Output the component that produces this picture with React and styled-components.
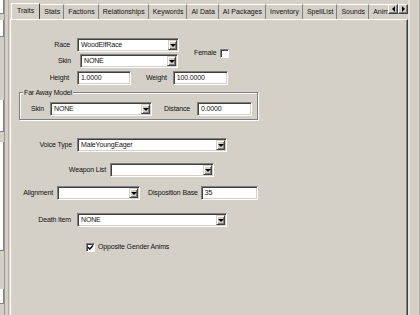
import React from "react";
import styled, { createGlobalStyle } from "styled-components";

const GlobalStyle = createGlobalStyle`
  html, body {
    margin: 0;
    padding: 0;
    background: #d4d0c8;
  }
  body {
    font-family: "Liberation Sans", Arial, sans-serif;
    font-size: 7px;
    letter-spacing: -0.15px;
    color: #111;
    overflow: hidden;
  }
`;

const TABS = [
  "Traits",
  "Stats",
  "Factions",
  "Relationships",
  "Keywords",
  "AI Data",
  "AI Packages",
  "Inventory",
  "SpellList",
  "Sounds",
  "Animation",
];

const Window = styled.div`
  display: flex;
  width: 420px;
  height: 315px;
  overflow: hidden;
  background: #d4d0c8;
`;

const LeftPane = styled.div`
  width: 4px;
  flex: none;
  margin-right: 5px;
  display: flex;
  flex-direction: column;
  border-right: 1px solid #9a968e;
  box-shadow: 3px 0 0 #d4d0c8, 4px 0 0 #b4b0a8;
`;

const Sliver = styled.div`
  height: ${(p) => p.$h}px;
  margin-top: ${(p) => p.$mt || 0}px;
  background: #fff;
  border-right: 1px solid #808080;
  border-bottom: 1px solid #808080;
`;

const Main = styled.div`
  flex: 1;
  display: flex;
  flex-direction: column;
  min-width: 0;
`;

const TabStrip = styled.div`
  display: flex;
  align-items: flex-end;
  height: 19px;
`;

const TabList = styled.div`
  flex: 1;
  min-width: 0;
  display: flex;
  align-items: flex-end;
  overflow: hidden;
  padding-left: 1px;
  height: 100%;
`;

const Tab = styled.div`
  flex: none;
  height: ${(p) => (p.$active ? 16 : 14)}px;
  line-height: ${(p) => (p.$active ? 14 : 13)}px;
  padding: ${(p) => (p.$active ? "0 5px" : "0 3px")};
  letter-spacing: 0;
  border-top: 1px solid #fff;
  border-left: 1px solid ${(p) => (p.$active ? "#fff" : "transparent")};
  border-right: 1px solid ${(p) => (p.$active ? "#404040" : "#808080")};
  white-space: nowrap;
  position: relative;
  z-index: ${(p) => (p.$active ? 1 : 0)};
  margin-bottom: ${(p) => (p.$active ? -1 : 0)}px;
  background: #d4d0c8;
`;

const Scroller = styled.div`
  display: flex;
  flex: none;
  margin: 0 0 5px 0;
`;

const ArrowBtn = styled.div`
  width: 10px;
  height: 10px;
  box-sizing: border-box;
  background: #d4d0c8;
  border-top: 1px solid #fff;
  border-left: 1px solid #fff;
  border-right: 1px solid #404040;
  border-bottom: 1px solid #404040;
  box-shadow: inset -1px -1px 0 #808080;
  display: flex;
  align-items: center;
  justify-content: center;
  &::after {
    content: "";
    border-top: 3px solid transparent;
    border-bottom: 3px solid transparent;
    ${(p) =>
      p.$dir === "left"
        ? "border-right: 3px solid #000;"
        : "border-left: 3px solid #000;"}
  }
`;

const Panel = styled.div`
  flex: 1;
  border-top: 1px solid #fff;
  border-left: 1px solid #fff;
  border-right: 1px solid #404040;
  box-shadow: inset -1px 0 0 #808080;
  padding-top: 18px;
  display: flex;
  flex-direction: column;
  align-items: flex-start;
`;

const RightStrip = styled.div`
  width: 9px;
  flex: none;
  border-left: 2px solid #e6e3dc;
  border-right: 1px solid #b4b0a8;
`;

const Row = styled.div`
  display: flex;
  align-items: center;
  margin-top: ${(p) => p.$mt || 0}px;
  padding-left: ${(p) => p.$pl || 0}px;
`;

const Stack = styled.div`
  display: flex;
  flex-direction: column;
`;

const Label = styled.span`
  ${(p) => (p.$w ? `width: ${p.$w}px; text-align: right;` : "")}
  margin-left: ${(p) => p.$ml || 0}px;
  white-space: nowrap;
  line-height: 10px;
  flex: none;
`;

const Field = styled.div`
  width: ${(p) => p.$w}px;
  height: 14px;
  margin-left: ${(p) => p.$ml || 0}px;
  box-sizing: border-box;
  background: #fff;
  border-top: 1px solid #808080;
  border-left: 1px solid #808080;
  border-right: 1px solid #fff;
  border-bottom: 1px solid #fff;
  box-shadow: inset 1px 1px 0 #404040, inset -1px -1px 0 #d4d0c8;
  display: flex;
  align-items: center;
  padding: 2px 2px 2px 3px;
  flex: none;
`;

const Value = styled.span`
  flex: 1;
  white-space: nowrap;
  overflow: hidden;
  line-height: 10px;
`;

const DropBtn = styled.span`
  width: 9px;
  height: 10px;
  box-sizing: border-box;
  background: #d4d0c8;
  border-top: 1px solid #d4d0c8;
  border-left: 1px solid #d4d0c8;
  border-right: 1px solid #404040;
  border-bottom: 1px solid #404040;
  box-shadow: inset 1px 1px 0 #fff, inset -1px -1px 0 #808080;
  display: flex;
  align-items: center;
  justify-content: center;
  margin-right: -1px;
  &::after {
    content: "";
    border-left: 3px solid transparent;
    border-right: 3px solid transparent;
    border-top: 3px solid #000;
  }
`;

const Check = styled.span`
  width: 9px;
  height: 9px;
  box-sizing: border-box;
  margin-left: ${(p) => p.$ml || 0}px;
  background: #fff;
  border-top: 1px solid #808080;
  border-left: 1px solid #808080;
  border-right: 1px solid #fff;
  border-bottom: 1px solid #fff;
  box-shadow: inset 1px 1px 0 #404040;
  display: flex;
  align-items: center;
  justify-content: center;
  flex: none;
`;

const GroupBox = styled.div`
  position: relative;
  margin: 7px 0 0 8px;
  width: 239px;
  box-sizing: border-box;
  border: 1px solid #808080;
  box-shadow: inset 1px 1px 0 #fff, 1px 1px 0 #fff;
  padding: 9px 0 3px 0;
`;

const GroupTitle = styled.span`
  position: absolute;
  top: -5px;
  left: 3px;
  padding: 0 1px;
  line-height: 9px;
  background: #d4d0c8;
  white-space: nowrap;
`;

const Combo = ({ w, ml, value }) => (
  <Field $w={w} $ml={ml}>
    <Value>{value}</Value>
    <DropBtn />
  </Field>
);

const TextBox = ({ w, ml, value }) => (
  <Field $w={w} $ml={ml}>
    <Value>{value}</Value>
  </Field>
);

const CheckBox = ({ checked, ml }) => (
  <Check $ml={ml}>
    {checked && (
      <svg width="7" height="7" viewBox="0 0 7 7">
        <path d="M1 3.2 L2.8 5 L6 1.5" fill="none" stroke="#000" strokeWidth="1.4" />
      </svg>
    )}
  </Check>
);

export default function App() {
  return (
    <>
      <GlobalStyle />
      <Window>
        <LeftPane>
          <Sliver $h={13} />
          <Sliver $h={16} $mt={6} />
          <Sliver $h={31} $mt={63} />
          <Sliver $h={108} $mt={10} />
          <Sliver $h={14} $mt={38} />
        </LeftPane>
        <Main>
          <TabStrip>
            <TabList>
              {TABS.map((t, i) => (
                <Tab key={t} $active={i === 0}>
                  {t}
                </Tab>
              ))}
            </TabList>
            <Scroller>
              <ArrowBtn $dir="left" />
              <ArrowBtn $dir="right" />
            </Scroller>
          </TabStrip>
          <Panel>
            <Row>
              <Stack>
                <Row>
                  <Label $w={59}>Race</Label>
                  <Combo w={102} ml={7} value="WoodElfRace" />
                </Row>
                <Row $mt={2}>
                  <Label $w={60}>Skin</Label>
                  <Combo w={98} ml={9} value="NONE" />
                </Row>
              </Stack>
              <Label $ml={15}>Female</Label>
              <CheckBox ml={4} />
            </Row>
            <Row $mt={3}>
              <Label $w={58}>Height</Label>
              <TextBox w={54} ml={8} value="1.0000" />
              <Label $ml={15}>Weight</Label>
              <TextBox w={55} ml={6} value="100.0000" />
            </Row>
            <GroupBox>
              <GroupTitle>Far Away Model</GroupTitle>
              <Row>
                <Label $w={24}>Skin</Label>
                <Combo w={102} ml={6} value="NONE" />
                <Label $ml={12}>Distance</Label>
                <TextBox w={55} ml={7} value="0.0000" />
              </Row>
            </GroupBox>
            <Row $mt={18}>
              <Label $w={61}>Voice Type</Label>
              <Combo w={150} ml={5} value="MaleYoungEager" />
            </Row>
            <Row $mt={11}>
              <Label $w={95}>Weapon List</Label>
              <Combo w={104} ml={4} value="" />
            </Row>
            <Row $mt={9}>
              <Label $w={42}>Alignment</Label>
              <Combo w={83} ml={4} value="" />
              <Label $ml={8}>Disposition Base</Label>
              <TextBox w={57} ml={3} value="35" />
            </Row>
            <Row $mt={13}>
              <Label $w={60}>Death Item</Label>
              <Combo w={150} ml={6} value="NONE" />
            </Row>
            <Row $mt={15} $pl={75}>
              <CheckBox checked />
              <Label $ml={3}>Opposite Gender Anims</Label>
            </Row>
          </Panel>
        </Main>
        <RightStrip />
      </Window>
    </>
  );
}
